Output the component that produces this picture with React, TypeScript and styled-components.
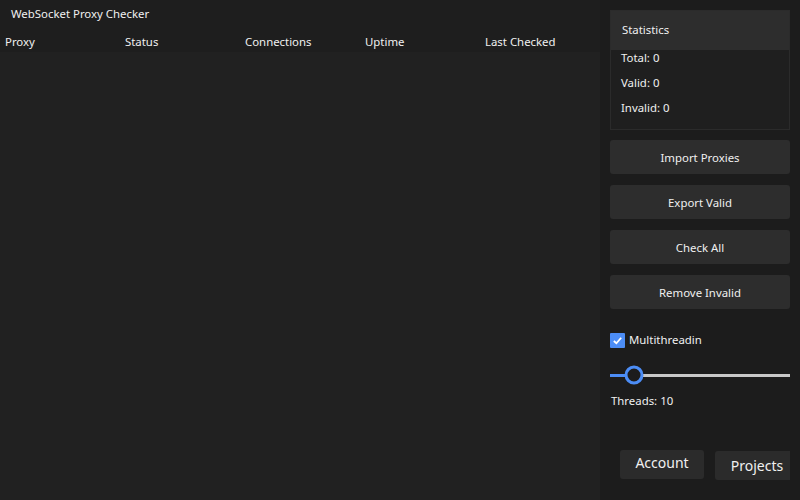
import React from "react";
import styled, { createGlobalStyle } from "styled-components";

const GlobalStyle = createGlobalStyle`
  html, body {
    margin: 0;
    padding: 0;
    background: #1c1c1c;
  }
  body {
    font-family: "Noto Sans", "Open Sans", sans-serif;
    color: #f0f0f0;
    font-size: 11.4px;
  }
`;

const Window = styled.div`
  display: flex;
  width: 800px;
  height: 500px;
  overflow: hidden;
  background: #1c1c1c;
`;

const LeftPanel = styled.div`
  display: flex;
  flex-direction: column;
  width: 600px;
  background: #1e1e1e;
`;

const Title = styled.div`
  height: 30px;
  padding-left: 11px;
  line-height: 28px;
`;

const HeaderRow = styled.div`
  display: grid;
  grid-template-columns: repeat(5, 120px);
  height: 22px;
  align-items: center;
  background: #1e1e1e;
`;

const HeaderCell = styled.div`
  padding-left: 5px;
`;

const TableBody = styled.div`
  flex: 1;
  background: #212121;
`;

const RightPanel = styled.div`
  display: flex;
  flex-direction: column;
  width: 180px;
  padding: 10px 10px 0 10px;
`;

const GroupBox = styled.div`
  display: flex;
  flex-direction: column;
  height: 120px;
  box-sizing: border-box;
  border: 1px solid #2b2b2b;
  background: #1f1f1f;
`;

const GroupHeader = styled.div`
  height: 39px;
  padding-left: 11px;
  line-height: 38px;
  background: #2d2d2d;
`;

const StatLine = styled.div`
  height: 25px;
  padding-left: 10px;
  line-height: 16px;
`;

const ButtonStack = styled.div`
  display: flex;
  flex-direction: column;
  gap: 11px;
  margin-top: 10px;
`;

const ActionButton = styled.button`
  height: 34px;
  border: none;
  border-radius: 3px;
  background: #2d2d2d;
  color: #f0f0f0;
  font-family: inherit;
  font-size: 11.4px;
`;

const CheckRow = styled.label`
  display: flex;
  align-items: flex-start;
  gap: 4px;
  margin-top: 23px;
  height: 20px;
  line-height: 15px;
`;

const CheckBox = styled.span`
  display: flex;
  align-items: center;
  justify-content: center;
  width: 15px;
  height: 15px;
  margin-top: 1px;
  background: #4c8df6;
  border-radius: 1px;
`;

const SliderWrap = styled.div`
  position: relative;
  height: 20px;
  margin-top: 13px;
  display: flex;
  align-items: center;
`;

const Track = styled.div`
  position: relative;
  width: 100%;
  height: 3px;
  background: #c8c8c8;
`;

const TrackFill = styled.div`
  height: 100%;
  background: #4c8df6;
`;

const Thumb = styled.div`
  position: absolute;
  top: 50%;
  width: 13px;
  height: 13px;
  border: 3px solid #4c8df6;
  border-radius: 50%;
  background: #1c1c1c;
  transform: translate(-50%, -50%);
`;

const ThreadsLabel = styled.div`
  margin-top: 8px;
  padding-left: 1px;
`;

const BottomRow = styled.div`
  display: flex;
  align-items: flex-start;
  gap: 11px;
  margin-top: auto;
  margin-bottom: 20px;
  padding-left: 10px;
  overflow: hidden;
`;

const NavButton = styled.button<{ offset: number }>`
  flex: none;
  width: 84px;
  height: 29px;
  margin-top: ${props => props.offset}px;
  border: none;
  border-radius: 3px;
  background: #2b2b2b;
  color: #f0f0f0;
  font-family: inherit;
  font-size: 14px;
  line-height: 18px;
  padding: ${props => props.offset ? "1px 0 0" : "0 0 4px"};
`;

const columns = ["Proxy", "Status", "Connections", "Uptime", "Last Checked"];
const actions = ["Import Proxies", "Export Valid", "Check All", "Remove Invalid"];

const App = () => {
  const threads = 10;
  const thumbX = 24;

  return (
    <Window>
      <GlobalStyle />
      <LeftPanel>
        <Title>WebSocket Proxy Checker</Title>
        <HeaderRow>
          {columns.map(c => (
            <HeaderCell key={c}>{c}</HeaderCell>
          ))}
        </HeaderRow>
        <TableBody />
      </LeftPanel>
      <RightPanel>
        <GroupBox>
          <GroupHeader>Statistics</GroupHeader>
          <StatLine>Total: 0</StatLine>
          <StatLine>Valid: 0</StatLine>
          <StatLine>Invalid: 0</StatLine>
        </GroupBox>
        <ButtonStack>
          {actions.map(a => (
            <ActionButton key={a}>{a}</ActionButton>
          ))}
        </ButtonStack>
        <CheckRow>
          <CheckBox>
            <svg width="11" height="11" viewBox="0 0 12 12">
              <path d="M2 6.5 L4.8 9 L10 3" fill="none" stroke="#fff" strokeWidth="2" />
            </svg>
          </CheckBox>
          <span>Multithreadin</span>
        </CheckRow>
        <SliderWrap>
          <Track>
            <TrackFill style={{ width: thumbX }} />
          </Track>
          <Thumb style={{ left: thumbX }} />
        </SliderWrap>
        <ThreadsLabel>Threads: {threads}</ThreadsLabel>
        <BottomRow>
          <NavButton offset={0}>Account</NavButton>
          <NavButton offset={1}>Projects</NavButton>
        </BottomRow>
      </RightPanel>
    </Window>
  );
};

export default App;
